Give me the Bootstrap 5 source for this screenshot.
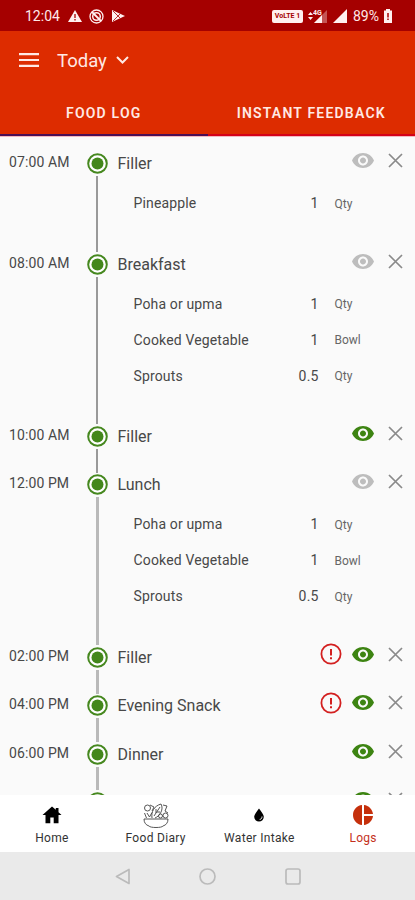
<!DOCTYPE html>
<html lang="en">
<head>
<meta charset="utf-8">
<meta name="viewport" content="width=device-width, initial-scale=1">
<title>Food Log</title>
<link href="https://cdn.jsdelivr.net/npm/bootstrap@5.3.0/dist/css/bootstrap.min.css" rel="stylesheet">
<style>
body{font-family:Roboto,"Liberation Sans",sans-serif;background:#fafafa;color:#484848;height:900px;overflow:hidden;line-height:20px}
svg{display:block;flex:none}
.statusbar{height:31px;background:#a50000;color:#ffe9e9;font-size:14px;padding:1px 23px 0 25px}
.volte{font-size:7px;line-height:13px;height:13px;width:31px;background:#fff0f0;color:#a50000;border-radius:2px;font-weight:700}
.appbar{height:105px;background:#dd2c00;color:#ffe9e4}
.titlebar{height:58px;padding-left:19px}
.day{font-size:18.5px;margin-left:18px;margin-right:9px;padding-top:1px}
.tabs{height:47px}
.tabs button{color:#ffe9e4;font-weight:600;font-size:14px;letter-spacing:1.2px;border-bottom:2px solid #d50018;padding:3px 0 0}
.tabs button.active{border-bottom-color:#4b0f55}
.log{height:659px;padding:17.2px 12.5px 0 9px;box-shadow:inset 0 1px #f2b9c0}
.meal{min-height:48.4px}
.time{width:77px;font-size:14px;letter-spacing:.1px;line-height:19.5px}
.rail{width:22px}
.node{margin-bottom:2px}
.line{width:2px;background:#999;margin-bottom:1.5px}
.late .line{width:3px;background:#b9b9b9}
.detail{padding-left:9.5px}
.title{font-size:16px;height:22px;line-height:22px}
.acts{height:15px;gap:14px}
.alert-icon{margin-right:-4px}
.foods{margin-top:10.1px;padding-bottom:32.3px;padding-left:16px;font-size:14px;letter-spacing:.15px}
.food{height:36px}
.food .name{width:135px}
.food .num{width:50px}
.food .unit{font-size:12px;color:#666;padding-left:16px;padding-top:1px;letter-spacing:0}
.bottomnav{height:57px;background:#fff;font-size:12px;color:#333;letter-spacing:.3px;line-height:14px}
.bottomnav svg{margin:8px 0 4px}
.bottomnav .bowl{margin-bottom:2px}
.bottomnav .active{color:#c4301c}
.sysbar{height:48px;background:#eaeaea}
</style>
<script src="https://cdn.jsdelivr.net/npm/bootstrap@5.3.0/dist/js/bootstrap.bundle.min.js"></script>
</head>
<body class="d-flex flex-column">
<svg width="0" height="0" class="position-absolute">
<symbol id="node" viewBox="0 0 21 21"><circle cx="10.500" cy="10.500" r="9.300" fill="#fff" stroke="#46881f" stroke-width="2"/><circle cx="10.500" cy="10.500" r="6" fill="#43871b"/></symbol>
<symbol id="eye" viewBox="1 4.500 22 15"><path fill="currentColor" d="M12 4.500C7 4.500 2.730 7.610 1 12c1.730 4.390 6 7.500 11 7.500s9.270-3.110 11-7.500c-1.730-4.390-6-7.500-11-7.500zM12 17c-2.760 0-5-2.240-5-5s2.240-5 5-5 5 2.240 5 5-2.240 5-5 5zm0-8c-1.660 0-3 1.340-3 3s1.340 3 3 3 3-1.340 3-3-1.340-3-3-3z"/></symbol>
<symbol id="cross" viewBox="0 0 15 15"><path d="M1 1 14 14M14 1 1 14" stroke="#8a8a8a" stroke-width="1.700"/></symbol>
<symbol id="alert" viewBox="0 0 22 22"><circle cx="11" cy="11" r="9.600" fill="none" stroke="#d32020" stroke-width="1.800"/><path d="M11 6v6.500M11 14.200v2" stroke="#d32020" stroke-width="2"/></symbol>
</svg>

<div class="statusbar d-flex align-items-center flex-shrink-0">
  <span>12:04</span>
  <svg class="ms-2" width="14" height="12" viewBox="0 0 14 12"><path fill="#fff0f0" d="M7 0 14 12H0z"/><path d="M7 4v4M7 9v1.500" stroke="#a50000" stroke-width="1.300"/></svg>
  <svg style="margin-left:7px" width="15" height="15" viewBox="0 0 15 15" fill="none" stroke="#fff0f0"><circle cx="7.500" cy="7.500" r="6.500" stroke-width="1.300"/><circle cx="7.500" cy="7.500" r="3.800" stroke-width="1.500"/><path d="M3 3l9 9" stroke-width="1.800"/></svg>
  <svg style="margin-left:8px" width="13" height="12" viewBox="0 0 13 12"><path fill="#fff0f0" d="M0 0 13 6 0 12z"/><path d="M1 1l7 7M1 11l7-7" stroke="#a50000" stroke-width=".8"/></svg>
  <div class="volte ms-auto text-center">VoLTE 1</div>
  <svg style="margin-left:5px" width="20" height="14" viewBox="0 0 20 14" fill="#fff0f0"><path d="M0 6 2.500 3 5 6zM0 8h5L2.500 11z"/><path d="M19 1v13H6z" opacity=".35"/><path d="M14 6v8H6z"/><text x="5" y="6" font-size="7" font-weight="700">4G</text></svg>
  <svg style="margin-left:5px" width="14" height="14" viewBox="0 0 14 14"><path fill="#fff0f0" d="M14 0v14H0z"/></svg>
  <span style="margin-left:6px">89%</span>
  <svg style="margin-left:5px" width="8" height="14" viewBox="0 0 8 14"><path fill="#fff0f0" d="M0 1.500h2V0h4v1.500h2V14H0z"/><path d="M4 4v4.500M4 9.500V11" stroke="#a50000" stroke-width="1.500"/></svg>
</div>

<header class="appbar flex-shrink-0">
  <div class="titlebar d-flex align-items-center">
    <svg width="20" height="14" viewBox="0 0 20 14"><path d="M0 1.200h20M0 7h20M0 12.800h20" stroke="#ffe9e4" stroke-width="2.200"/></svg>
    <span class="day">Today</span>
    <svg width="13" height="8" viewBox="0 0 13 8"><path d="M1 1l5.500 5.500L12 1" fill="none" stroke="#ffe9e4" stroke-width="2"/></svg>
  </div>
  <div class="tabs d-flex">
    <button class="btn rounded-0 border-top-0 border-start-0 border-end-0 w-50 active">FOOD LOG</button>
    <button class="btn rounded-0 border-top-0 border-start-0 border-end-0 w-50">INSTANT FEEDBACK</button>
  </div>
</header>

<main class="log overflow-hidden flex-shrink-0" id="log"></main>

<nav class="bottomnav d-flex flex-shrink-0">
  <div class="w-25 d-flex flex-column align-items-center"><svg width="24" height="24" viewBox="0 0 24 24"><path d="M12 3.500 2.500 12h3v8.200h4.800v-5.700h3.400v5.700h4.800V12h3l-3-2.700V5h-2.700v1.800z"/></svg>Home</div>
  <div class="w-25 d-flex flex-column align-items-center"><svg class="bowl" width="26" height="26" viewBox="0 0 26 26" fill="none" stroke="#444" stroke-width=".9"><path d="M1 16h24c0 4-2 6-5 7-1 2-13 2-14 0-3-1-5-3-5-7z"/><circle cx="4.500" cy="5" r="3"/><path d="M1.500 10l2 5M4 10l2.500 4L9 9.500M7 2l4 2-2 4M9 15c-1-6 2-12 9-14 3 5-1 12-6 14M11 13l6-9M14 9h3M13 6v4M20 2l4 1-2 5 3 2"/><circle cx="17.500" cy="13" r="2"/><circle cx="22.500" cy="12.500" r="2.500"/></svg>Food Diary</div>
  <div class="w-25 d-flex flex-column align-items-center"><svg width="24" height="24" viewBox="0 0 24 24"><path d="M12 5.500c2.200 3.300 4.800 6 4.800 8.300a4.800 4.800 0 0 1-9.600 0c0-2.300 2.600-5 4.800-8.300z"/><path d="M15 13.500c0 1.800-.8 2.700-2.300 2.900" stroke="#fff" fill="none"/></svg>Water Intake</div>
  <div class="w-25 d-flex flex-column align-items-center active"><svg width="24" height="24" viewBox="0 0 24 24" fill="#c5300c"><path d="M11 2v20C5.900 21.500 2 17.200 2 12S5.900 2.500 11 2zM13 2v9h9c-.5-4.700-4.300-8.500-9-9zM13 13v9c4.700-.5 8.500-4.300 9-9z"/></svg>Logs</div>
</nav>

<div class="sysbar d-flex justify-content-center align-items-center flex-shrink-0">
  <svg width="16" height="17" viewBox="0 0 16 17"><path d="M14 1.500v14L1.500 8.500z" fill="none" stroke="#bbb" stroke-width="1.700" stroke-linejoin="round"/></svg>
  <svg style="margin:0 69px 0 68px" width="17" height="17" viewBox="0 0 17 17"><circle cx="8.500" cy="8.500" r="7.500" fill="none" stroke="#bbb" stroke-width="1.700"/></svg>
  <svg width="16" height="17" viewBox="0 0 16 17"><rect x="1" y="1" width="14" height="15" rx="2" fill="none" stroke="#bbb" stroke-width="1.700"/></svg>
</div>

<script>
const three = [["Poha or upma","1","Qty"],["Cooked Vegetable","1","Bowl"],["Sprouts","0.5","Qty"]];
const meals = [
  {t:"07:00 AM", n:"Filler", foods:[["Pineapple","1","Qty"]]},
  {t:"08:00 AM", n:"Breakfast", foods:three},
  {t:"10:00 AM", n:"Filler", seen:1},
  {t:"12:00 PM", n:"Lunch", foods:three, late:1},
  {t:"02:00 PM", n:"Filler", seen:1, alert:1, late:1},
  {t:"04:00 PM", n:"Evening Snack", seen:1, alert:1, late:1},
  {t:"06:00 PM", n:"Dinner", seen:1, late:1},
  {t:"", n:"", seen:1, late:1}
];
document.getElementById("log").innerHTML = meals.map(m => `
<section class="meal d-flex ${m.late ? "late" : ""}">
  <div class="time">${m.t}</div>
  <div class="rail d-flex flex-column align-items-center">
    <svg class="node" width="21" height="21"><use href="#node"/></svg>
    <div class="line flex-grow-1"></div>
  </div>
  <div class="detail flex-grow-1">
    <div class="d-flex justify-content-between">
      <div class="title">${m.n}</div>
      <div class="acts d-flex align-items-center">
        ${m.alert ? '<svg class="alert-icon" width="22" height="22"><use href="#alert"/></svg>' : ""}
        <svg width="22" height="15" color="${m.seen ? "#3d8412" : "#bdbdbd"}"><use href="#eye"/></svg>
        <svg width="15" height="15"><use href="#cross"/></svg>
      </div>
    </div>
    ${m.foods ? `<div class="foods">${m.foods.map(f => `
      <div class="food d-flex align-items-center"><span class="name">${f[0]}</span><span class="num text-end">${f[1]}</span><span class="unit">${f[2]}</span></div>`).join("")}</div>` : ""}
  </div>
</section>`).join("");
</script>
</body>
</html>
